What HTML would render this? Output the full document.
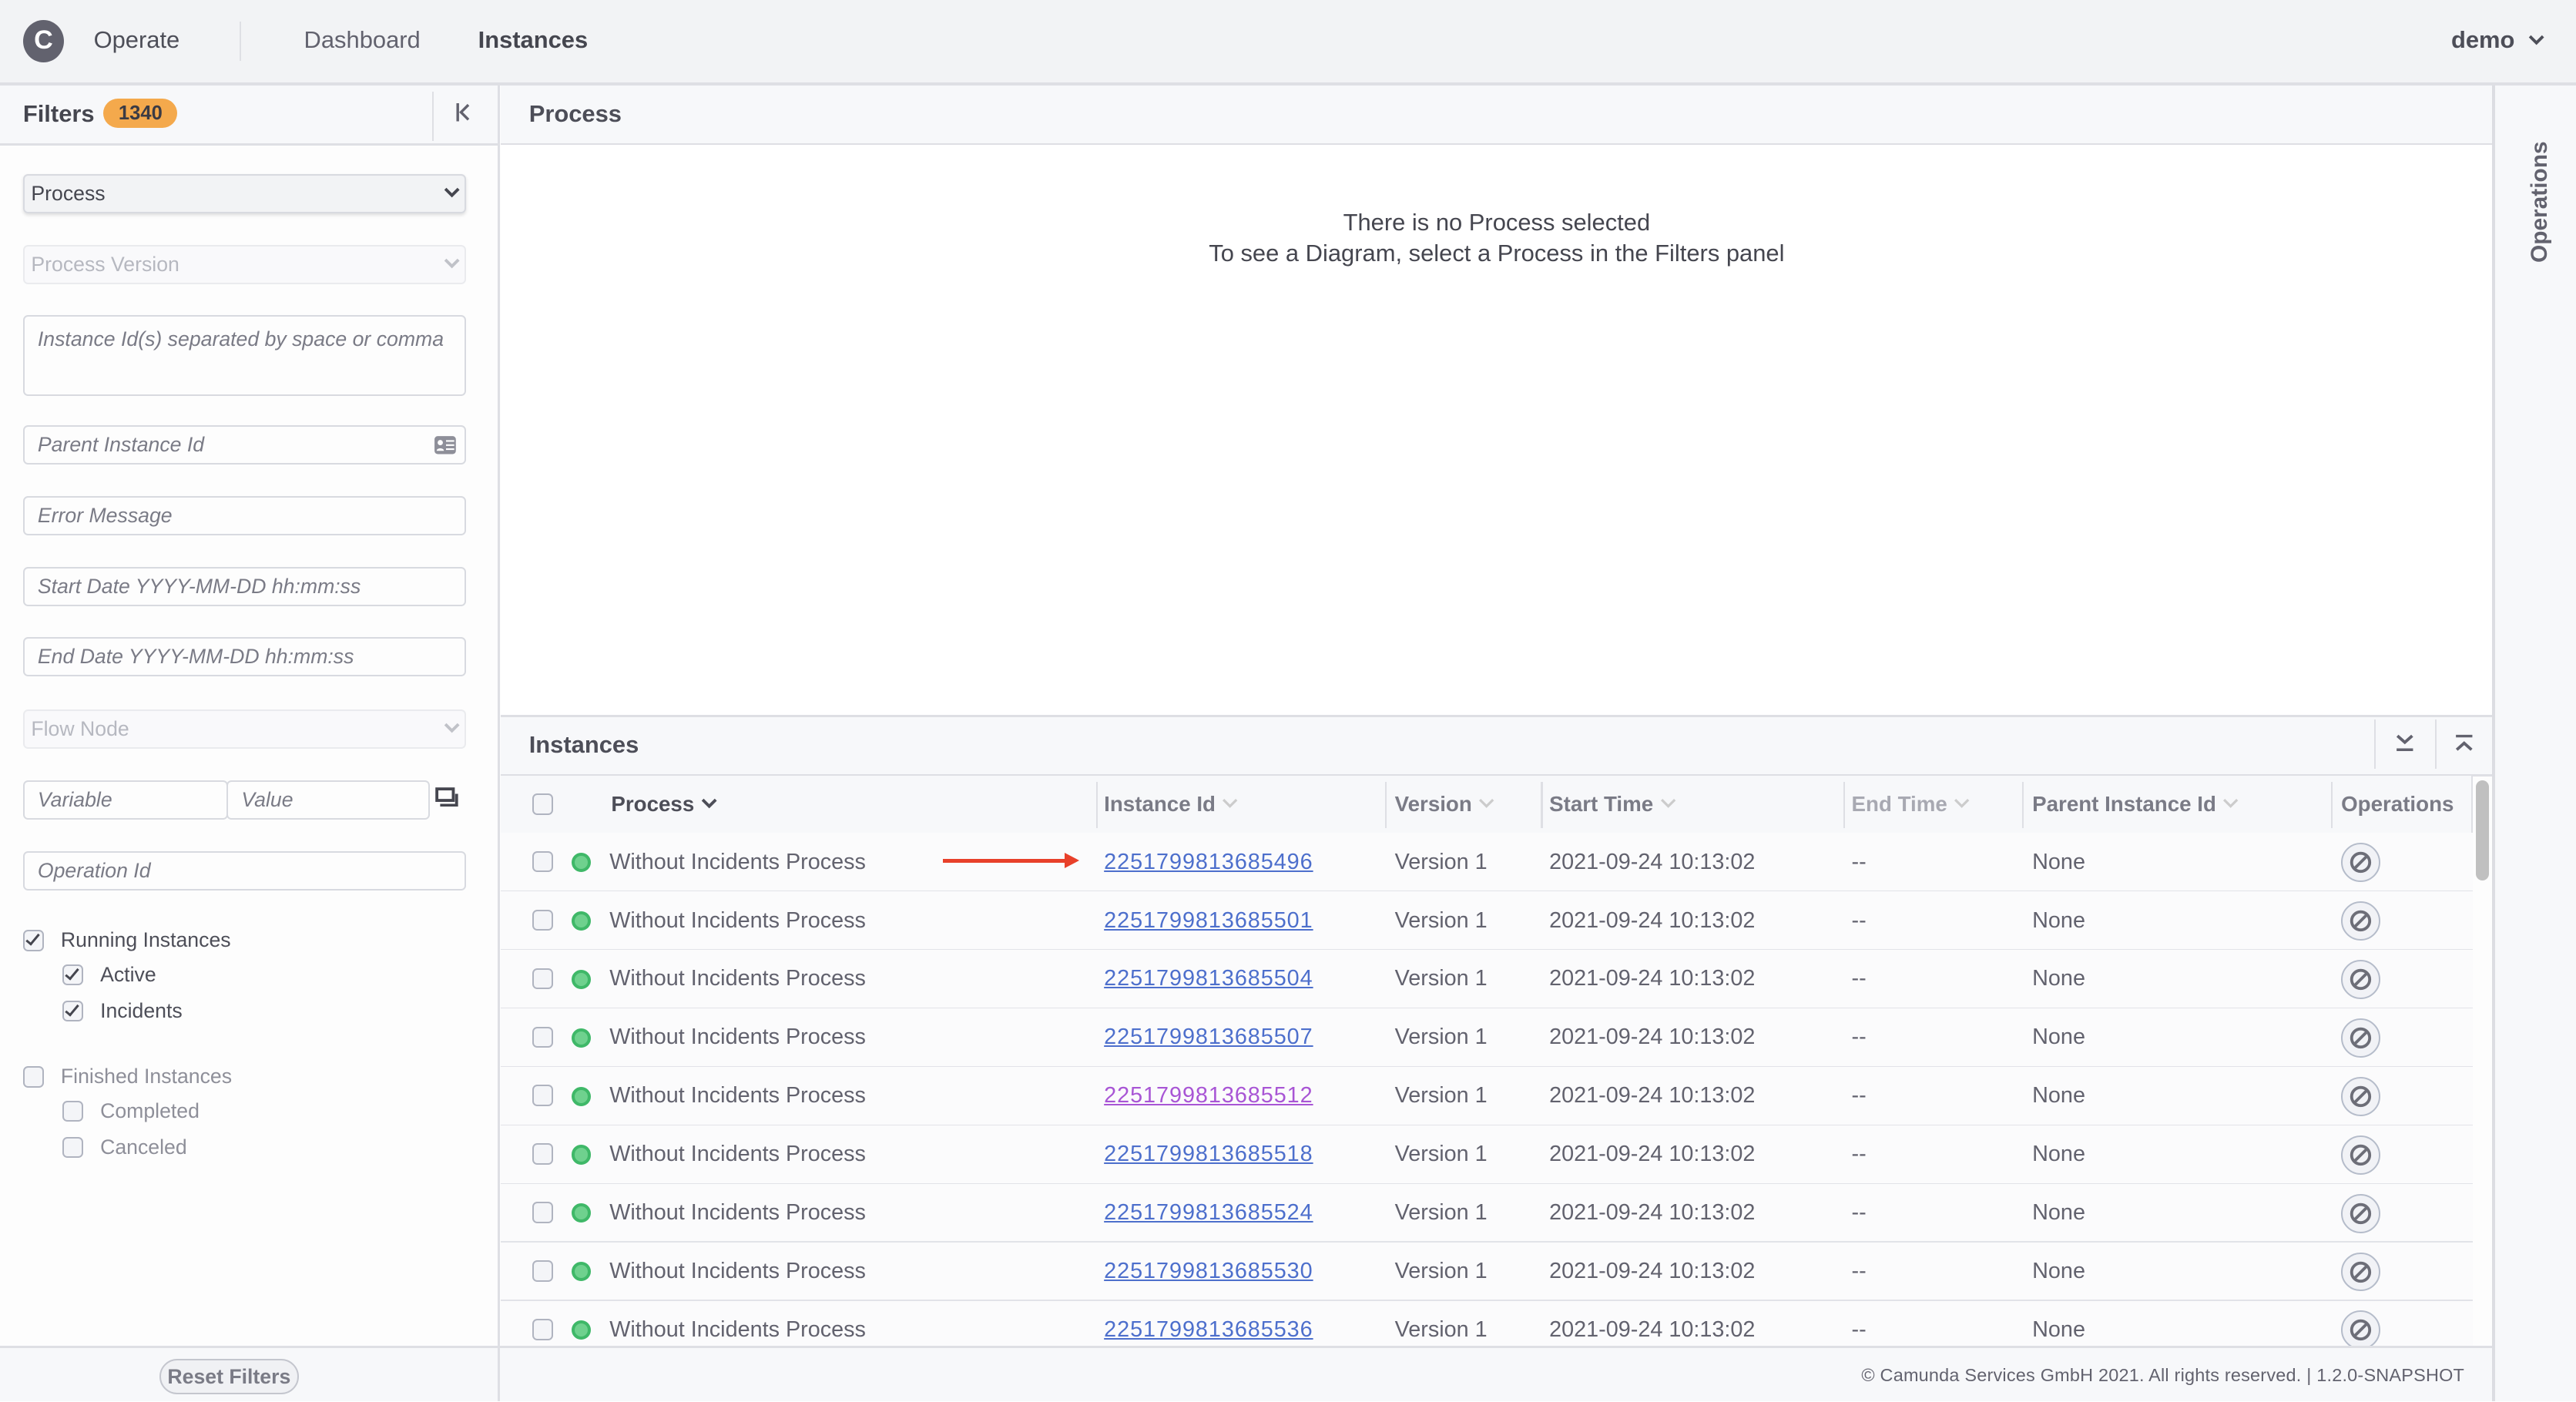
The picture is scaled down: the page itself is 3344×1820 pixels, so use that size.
<!DOCTYPE html>
<html><head><meta charset="utf-8"><style>
html,body{margin:0;padding:0;width:3344px;height:1820px;overflow:hidden;background:#fff}
#r{position:absolute;left:0;top:0;width:1568px;height:853px;zoom:2.1327;font-family:"Liberation Sans",sans-serif;color:#62626e;overflow:hidden;background:#fdfdfd}
.a{position:absolute}
.hdr{left:0;top:0;width:1568px;height:50px;background:#f2f3f5;border-bottom:2px solid #dedfe4}
.inp{position:absolute;left:14px;width:260px;height:22px;border:1px solid #d8dae0;border-radius:3px;background:#fdfdfd;font-style:italic;font-size:12.5px;color:#7a7b86;line-height:22px;padding-left:8px}
.sel{position:absolute;left:14px;width:264px;height:22px;border:1px solid #d8dae0;border-radius:3px;background:#f2f3f5;font-size:12.5px;line-height:22px;padding-left:4px}
.sel svg{position:absolute;right:3px;top:7px}
.cb{position:absolute;width:11px;height:11px;border:1px solid #b0b4c0;border-radius:3px;background:#f4f5f8}
.cbk::after{content:"";position:absolute;left:3px;top:0px;width:3px;height:7px;border:solid #45464f;border-width:0 1.6px 1.6px 0;transform:rotate(40deg)}
.row{position:absolute;left:305px;width:1200px;height:35px;border-bottom:1.5px solid #e2e3e8;background:#fbfbfc;font-size:13.5px}
.row span{position:absolute;top:10px}
.row a{position:absolute;top:10px;left:367px;color:#4d6fcc;text-decoration:underline;letter-spacing:0.45px}
.dot{position:absolute;left:43px;top:12px;width:8px;height:8px;border-radius:50%;background:#6fd18e;border:2px solid #3fb868}
.op{position:absolute;left:1120px;top:6px;width:22px;height:22px;border:1px solid #b5bcca;border-radius:50%;background:#f1f2f6}
.th{position:absolute;top:482px;font-size:13px;font-weight:bold;color:#4d4e58}
.th svg{margin-left:4px;vertical-align:1px}
.sep{position:absolute;width:1px;background:#dedfe4}
</style></head><body><div id="r">
<div class="a hdr"></div>
<div class="a" style="left:14px;top:12px;width:25px;height:26px;border-radius:50%;background:#62626e;color:#fff;font-weight:bold;font-size:16px;text-align:center;line-height:25px">C</div>
<div class="a" style="left:57px;top:16px;font-size:14.5px;color:#4d4e58">Operate</div>
<div class="a sep" style="left:146px;top:13px;height:24px"></div>
<div class="a" style="left:185px;top:16px;font-size:14.5px;color:#62626e">Dashboard</div>
<div class="a" style="left:291px;top:16px;font-size:14.5px;color:#45464f;font-weight:bold">Instances</div>
<div class="a" style="left:1492px;top:16px;font-size:14.5px;color:#4d4e58;font-weight:bold">demo</div>
<svg class="a" style="left:1539px;top:21px" width="10" height="7" viewBox="0 0 10 7"><path d="M1 1l4 4 4-4" fill="none" stroke="#4d4e58" stroke-width="1.8"/></svg>

<div class="a" style="left:0;top:52px;width:303px;height:35px;background:#f7f8fa;border-bottom:1.5px solid #dedfe4"></div>
<div class="a" style="left:14px;top:61px;font-size:14.5px;font-weight:bold;color:#45464f">Filters</div>
<div class="a" style="left:63px;top:60px;width:45px;height:18px;border-radius:9px;background:#f4a94c;font-size:12px;font-weight:bold;text-align:center;line-height:18px;color:#3b3b44">1340</div>
<div class="a sep" style="left:263px;top:56px;height:30px"></div>
<svg class="a" style="left:277px;top:63px" width="10" height="11" viewBox="0 0 10 11"><path d="M1.5 0v11M8 1L3.5 5.5 8 10" fill="none" stroke="#62626e" stroke-width="1.6"/></svg>
<div class="a sep" style="left:303px;top:52px;height:801px;width:1.5px"></div>
<div class="sel" style="top:106px;color:#45464f;box-shadow:0 1px 2px rgba(0,0,0,.12)">Process<svg width="10" height="7" viewBox="0 0 10 7"><path d="M1 1l4 4 4-4" fill="none" stroke="#45464f" stroke-width="1.8"/></svg></div>
<div class="sel" style="top:149px;color:#b6b8c0;background:#f9f9fb;border-color:#eaebee">Process Version<svg width="10" height="7" viewBox="0 0 10 7"><path d="M1 1l4 4 4-4" fill="none" stroke="#c0c2c8" stroke-width="1.8"/></svg></div>
<div class="inp" style="top:192px;height:47px;line-height:28px">Instance Id(s) separated by space or comma</div>
<div class="inp" style="top:259px">Parent Instance Id<svg style="position:absolute;right:5px;top:5px" width="14" height="12" viewBox="0 0 14 12"><rect x="0.5" y="0.5" width="13" height="11" rx="2" fill="#8e8f99"/><circle cx="4" cy="4.5" r="1.6" fill="#fff"/><path d="M1.8 9.5c0-2 4.4-2 4.4 0z" fill="#fff"/><path d="M7.5 3.5h5M7.5 6h5M7.5 8.5h5" stroke="#fff" stroke-width="1"/></svg></div>
<div class="inp" style="top:302px">Error Message</div>
<div class="inp" style="top:345px">Start Date YYYY-MM-DD hh:mm:ss</div>
<div class="inp" style="top:388px">End Date YYYY-MM-DD hh:mm:ss</div>
<div class="sel" style="top:432px;color:#b6b8c0;background:#f9f9fb;border-color:#eaebee">Flow Node<svg width="10" height="7" viewBox="0 0 10 7"><path d="M1 1l4 4 4-4" fill="none" stroke="#c0c2c8" stroke-width="1.8"/></svg></div>
<div class="inp" style="top:475px;width:115px">Variable</div>
<div class="inp" style="top:475px;left:138px;width:114px">Value</div>
<svg class="a" style="left:265px;top:479px" width="14" height="12" viewBox="0 0 14 12"><rect x="1" y="1" width="10" height="7" fill="none" stroke="#45464f" stroke-width="1.8"/><path d="M13 4v7H3" fill="none" stroke="#45464f" stroke-width="1.8"/></svg>
<div class="inp" style="top:518px">Operation Id</div>
<div class="cb cbk" style="left:14px;top:566px"></div><div class="a" style="left:37px;top:565px;font-size:12.5px;color:#4d4e58">Running Instances</div>
<div class="cb cbk" style="left:38px;top:587px"></div><div class="a" style="left:61px;top:586px;font-size:12.5px;color:#4d4e58">Active</div>
<div class="cb cbk" style="left:38px;top:609px"></div><div class="a" style="left:61px;top:608px;font-size:12.5px;color:#4d4e58">Incidents</div>
<div class="cb" style="left:14px;top:649px"></div><div class="a" style="left:37px;top:648px;font-size:12.5px;color:#8e8f99">Finished Instances</div>
<div class="cb" style="left:38px;top:670px"></div><div class="a" style="left:61px;top:669px;font-size:12.5px;color:#8e8f99">Completed</div>
<div class="cb" style="left:38px;top:692px"></div><div class="a" style="left:61px;top:691px;font-size:12.5px;color:#8e8f99">Canceled</div>

<div class="a" style="left:305px;top:52px;width:1212px;height:35px;background:#f7f8fa;border-bottom:1.5px solid #dedfe4"></div>
<div class="a" style="left:322px;top:61px;font-size:14.5px;font-weight:bold;color:#4d4e58">Process</div>
<div class="a" style="left:305px;top:88px;width:1212px;height:347px;background:#fff"></div>
<div class="a" style="left:305px;top:126px;width:1212px;text-align:center;font-size:14.5px;color:#45464f;line-height:19px">There is no Process selected<br>To see a Diagram, select a Process in the Filters panel</div>
<div class="a" style="left:1517px;top:52px;width:51px;height:801px;background:#f7f8fa;border-left:2px solid #dcdde2"></div>
<div class="a" style="left:1538px;top:160px;transform:rotate(-90deg);transform-origin:0 0;font-size:14px;font-weight:bold;color:#62626e">Operations</div>

<div class="a" style="left:305px;top:435px;width:1212px;height:35px;background:#f7f8fa;border-top:1.5px solid #dedfe4;border-bottom:1.5px solid #dedfe4"></div>
<div class="a" style="left:322px;top:445px;font-size:14.5px;font-weight:bold;color:#4d4e58">Instances</div>
<div class="a sep" style="left:1445px;top:438px;height:30px"></div><div class="a sep" style="left:1482px;top:438px;height:30px"></div>
<svg class="a" style="left:1458px;top:447px" width="12" height="11" viewBox="0 0 12 11"><path d="M1.5 1l4.5 4 4.5-4" fill="none" stroke="#62626e" stroke-width="1.8"/><path d="M1 9.5h10" stroke="#62626e" stroke-width="1.6"/></svg>
<svg class="a" style="left:1494px;top:447px" width="12" height="11" viewBox="0 0 12 11"><path d="M1 1.2h10" stroke="#62626e" stroke-width="1.6"/><path d="M1.5 9.5l4.5-4 4.5 4" fill="none" stroke="#62626e" stroke-width="1.8"/></svg>
<div class="a" style="left:305px;top:472px;width:1200px;height:35px;background:#f7f8fa;border-bottom:1.5px solid #dedfe4"></div>
<div class="cb" style="left:324px;top:483px"></div>
<div class="th" style="left:372px">Process<svg width="10" height="7" viewBox="0 0 10 7"><path d="M1 1l4 4 4-4" fill="none" stroke="#4d4e58" stroke-width="1.8"/></svg></div>
<div class="sep" style="left:667px;top:476px;height:28px"></div><div class="th" style="left:672px;color:#7a7b86">Instance Id<svg width="10" height="7" viewBox="0 0 10 7"><path d="M1 1l4 4 4-4" fill="none" stroke="#ccc" stroke-width="1.5"/></svg></div>
<div class="sep" style="left:843px;top:476px;height:28px"></div><div class="th" style="left:849px;color:#7a7b86">Version<svg width="10" height="7" viewBox="0 0 10 7"><path d="M1 1l4 4 4-4" fill="none" stroke="#ccc" stroke-width="1.5"/></svg></div>
<div class="sep" style="left:938px;top:476px;height:28px"></div><div class="th" style="left:943px;color:#7a7b86">Start Time<svg width="10" height="7" viewBox="0 0 10 7"><path d="M1 1l4 4 4-4" fill="none" stroke="#ccc" stroke-width="1.5"/></svg></div>
<div class="sep" style="left:1122px;top:476px;height:28px"></div><div class="th" style="left:1127px;color:#a8a9b2">End Time<svg width="10" height="7" viewBox="0 0 10 7"><path d="M1 1l4 4 4-4" fill="none" stroke="#ccc" stroke-width="1.5"/></svg></div>
<div class="sep" style="left:1231px;top:476px;height:28px"></div><div class="th" style="left:1237px;color:#7a7b86">Parent Instance Id<svg width="10" height="7" viewBox="0 0 10 7"><path d="M1 1l4 4 4-4" fill="none" stroke="#ccc" stroke-width="1.5"/></svg></div>
<div class="sep" style="left:1419px;top:476px;height:28px"></div><div class="th" style="left:1425px;color:#7a7b86">Operations</div>
<div class="a" style="left:1507px;top:475px;width:8px;height:61px;border-radius:4px;background:#c0c0c0"></div>
<div class="a sep" style="left:1504px;top:472px;height:348px"></div>

<div id="rows"></div>
<div class="a" style="left:574px;top:523px;width:74px;height:2px;background:#e8402a"></div>
<div class="a" style="left:648px;top:519px;width:0;height:0;border-left:9px solid #e8402a;border-top:5px solid transparent;border-bottom:5px solid transparent"></div>

<div class="a" style="left:0;top:819px;width:1517px;height:34px;background:#f7f8fa;border-top:1.5px solid #dedfe4;z-index:5"></div>
<div class="a sep" style="left:303px;top:820px;height:33px;width:1.5px;z-index:6"></div>
<div class="a" style="left:97px;top:827px;width:83px;height:20px;border:1px solid #c4c6ce;border-radius:11px;background:#f0f1f4;font-size:12.5px;font-weight:bold;color:#7a7b86;text-align:center;line-height:20px;z-index:6">Reset Filters</div>
<div class="a" style="left:1133px;top:831px;font-size:11px;color:#62626e;z-index:6;letter-spacing:0.1px">© Camunda Services GmbH 2021. All rights reserved. | 1.2.0-SNAPSHOT</div>
</div>
<script>
var ids=["496","501","504","507","512","518","524","530","536"],h="";
ids.forEach(function(s,i){var t=507+i*35.6;
h+='<div class="row" style="top:'+t+'px"><div class="cb" style="left:19px;top:11px"></div><div class="dot"></div><span style="left:66px">Without Incidents Process</span><a style="'+(s=="512"?"color:#a855d5":"")+'">2251799813685'+s+'</a><span style="left:544px">Version 1</span><span style="left:638px">2021-09-24 10:13:02</span><span style="left:822px">--</span><span style="left:932px">None</span><div class="op"><svg width="22" height="22" viewBox="0 0 22 22" style="position:absolute;left:0;top:0"><circle cx="11" cy="11" r="5.5" fill="none" stroke="#6d6e78" stroke-width="1.8"/><line x1="7.5" y1="14.5" x2="14.5" y2="7.5" stroke="#6d6e78" stroke-width="1.8"/></svg></div></div>';});
document.getElementById("rows").innerHTML=h;
</script>
</body></html>
